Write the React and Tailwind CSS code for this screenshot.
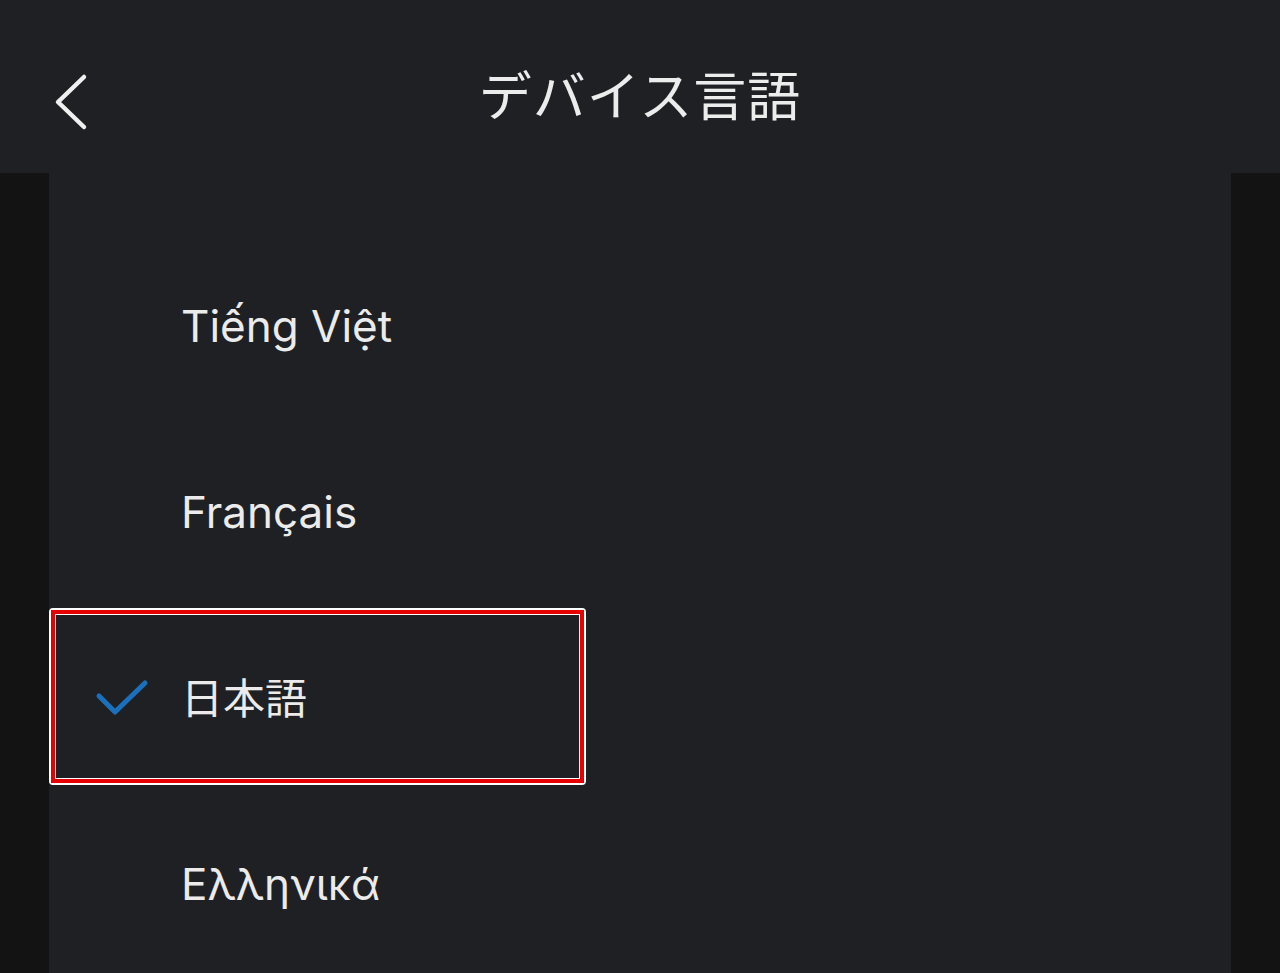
import React from 'react';

const languages = [
  { label: 'Tiếng Việt' },
  { label: 'Français' },
  { label: '日本語', selected: true },
  { label: 'Ελληνικά' },
];

function BackChevron() {
  return (
    <svg width="40" height="60" viewBox="0 0 40 60" fill="none">
      <path d="M32 6 L6 31 L32 56" stroke="#f0f0f0" strokeWidth="4.5" strokeLinecap="round" strokeLinejoin="round" />
    </svg>
  );
}

function Check() {
  return (
    <svg width="56" height="40" viewBox="0 0 56 40" fill="none">
      <path d="M4 17 L20 33 L50 4" stroke="#1a70bd" strokeWidth="5" strokeLinecap="round" strokeLinejoin="round" />
    </svg>
  );
}

export default function App() {
  return (
    <div
      className="w-[1280px] h-[973px] overflow-hidden bg-[#131313] flex flex-col"
      style={{ fontFamily: 'Inter, "Noto Sans CJK JP", sans-serif' }}
    >
      <header className="h-[173px] shrink-0 bg-[#1f2023] relative flex items-center justify-center">
        <button type="button" className="absolute left-[52px] top-[71px]">
          <BackChevron />
        </button>
        <h1 className="text-[53px] text-[#ececec] tracking-[1px] mt-[22px]">デバイス言語</h1>
      </header>

      <div className="flex-1 flex">
        <div className="w-[49px] shrink-0" />
        <div className="flex-1 bg-[#1f2023] pt-[60px]">
          {languages.map((lang) => (
            <div key={lang.label} className="relative h-[186px] flex items-center">
              <div className="w-[132px] shrink-0 flex justify-end pr-[30px] pt-[2px]">
                {lang.selected && <Check />}
              </div>
              <span className={lang.selected ? 'text-[42px] text-[#ebebeb]' : 'text-[44px] text-[#ebebeb]'}>
                {lang.label}
              </span>
              {lang.selected && (
                <div className="absolute left-0 top-[3px] w-[537px] h-[177px] rounded-[4px] border-[2px] border-white">
                  <div className="w-full h-full border-[4px] border-[#e60000]">
                    <div className="w-full h-full border-[1.5px] border-white" />
                  </div>
                </div>
              )}
            </div>
          ))}
        </div>
        <div className="w-[49px] shrink-0" />
      </div>
    </div>
  );
}
